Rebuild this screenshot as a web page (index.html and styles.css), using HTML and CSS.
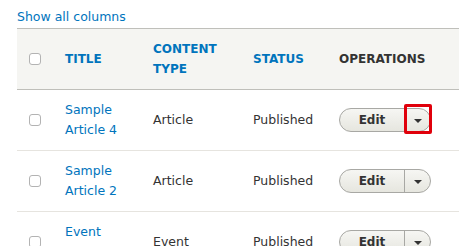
FILE: index.html
```html
<!DOCTYPE html>
<html lang="en">
<head>
	<meta charset="UTF-8">
	<title>Content</title>
	<link rel="stylesheet" href="styles.css">
</head>
<body>
	<div class="tableTools">
		<a href="#" class="showColumns">Show all columns</a>
	</div>

	<table class="contentTable">
		<colgroup>
			<col class="colSelect">
			<col class="colTitle">
			<col class="colType">
			<col class="colStatus">
			<col>
		</colgroup>
		<thead>
			<tr>
				<th><input type="checkbox" class="rowCheck"></th>
				<th><a href="#">Title</a></th>
				<th><a href="#">Content type</a></th>
				<th><a href="#">Status</a></th>
				<th>Operations</th>
			</tr>
		</thead>
		<tbody>
			<tr>
				<td><input type="checkbox" class="rowCheck"></td>
				<td><a href="#">Sample Article 4</a></td>
				<td>Article</td>
				<td>Published</td>
				<td>
					<div class="dropbutton">
						<a href="#" class="dropMain">Edit</a>
						<span class="dropToggle"><span class="arrow"></span></span>
						<span class="highlight"></span>
					</div>
				</td>
			</tr>
			<tr>
				<td><input type="checkbox" class="rowCheck"></td>
				<td><a href="#">Sample Article 2</a></td>
				<td>Article</td>
				<td>Published</td>
				<td>
					<div class="dropbutton">
						<a href="#" class="dropMain">Edit</a>
						<span class="dropToggle"><span class="arrow"></span></span>
					</div>
				</td>
			</tr>
			<tr>
				<td><input type="checkbox" class="rowCheck"></td>
				<td><a href="#">Event Sample</a></td>
				<td>Event</td>
				<td>Published</td>
				<td>
					<div class="dropbutton">
						<a href="#" class="dropMain">Edit</a>
						<span class="dropToggle"><span class="arrow"></span></span>
					</div>
				</td>
			</tr>
		</tbody>
	</table>
</body>
</html>
```

FILE: styles.css
```css
html, body {
	margin: 0;
	padding: 0;
}

body {
	background: #fff;
	color: #333;
	font-family: "DejaVu Sans", "Liberation Sans", sans-serif;
	font-size: 12.5px;
	overflow: hidden;
}

a {
	color: #0074bd;
	text-decoration: none;
}

.tableTools {
	height: 28px;
	padding-left: 17px;
	line-height: 34px;
}

.contentTable {
	margin-left: 17px;
	width: 442px;
	border-collapse: collapse;
	table-layout: fixed;
}

.colSelect { width: 36px; }
.colTitle { width: 88px; }
.colType { width: 100px; }
.colStatus { width: 86px; }

.contentTable th {
	background: #f5f5f2;
	border-top: 1px solid #bfbfba;
	border-bottom: 1px solid #bfbfba;
	padding: 10px 0 10px 12px;
	height: 40px;
	text-align: left;
	font-size: 12px;
	font-weight: bold;
	text-transform: uppercase;
	line-height: 20px;
	color: #333;
}

.contentTable td {
	border-bottom: 1px solid #e6e4df;
	padding: 10px 0 10px 12px;
	height: 40px;
	line-height: 20px;
	vertical-align: middle;
}

.rowCheck {
	-webkit-appearance: none;
	appearance: none;
	display: block;
	width: 12px;
	height: 12px;
	margin: 0;
	border: 1px solid #b3b3b3;
	border-radius: 3px;
	background: #fff;
}

.dropbutton {
	position: relative;
	display: inline-flex;
	width: 90px;
	height: 22px;
	border: 1px solid #a8a8a4;
	border-radius: 12px;
	background: linear-gradient(#f6f6f3, #e6e6df);
}

.dropMain {
	width: 64px;
	text-align: center;
	line-height: 22px;
	font-size: 12px;
	font-weight: bold;
	color: #333;
}

.dropToggle {
	flex: 1;
	border-left: 1px solid #a8a8a4;
	display: flex;
	align-items: center;
	justify-content: center;
}

.arrow {
	width: 0;
	height: 0;
	border-left: 4px solid transparent;
	border-right: 4px solid transparent;
	border-top: 4px solid #333;
	margin-top: 1px;
}

.highlight {
	position: absolute;
	left: 64px;
	top: -5px;
	width: 22px;
	height: 24px;
	border: 3px solid #e0000b;
	border-radius: 2px;
}
```
